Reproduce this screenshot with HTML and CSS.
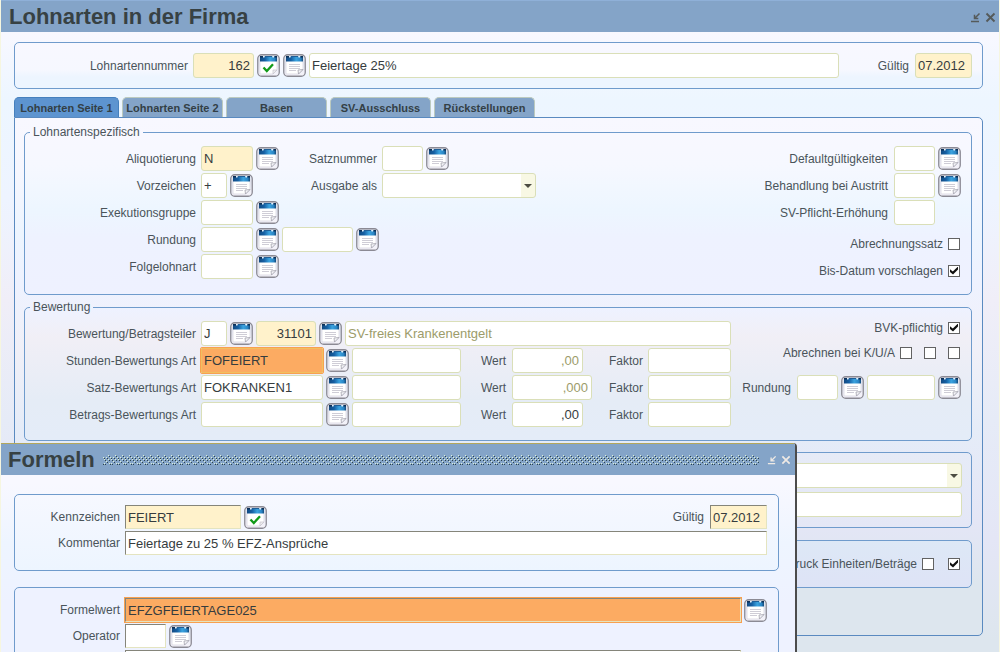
FILE: index.html
```html
<!DOCTYPE html>
<html lang="de">
<head>
<meta charset="utf-8">
<title>Lohnarten in der Firma</title>
<link rel="stylesheet" href="styles.css">
</head>
<body>
<svg class="sprite" aria-hidden="true">
  <defs>
    <linearGradient id="blue" x1="0" x2="1" y1="0" y2="0">
      <stop offset="0" stop-color="#124a82"/>
      <stop offset=".3" stop-color="#1560a4"/>
      <stop offset=".6" stop-color="#3ba3df"/>
      <stop offset=".85" stop-color="#2a86c6"/>
      <stop offset="1" stop-color="#124a7c"/>
    </linearGradient>
    <linearGradient id="plate" x1="0" x2="0" y1="0" y2="1">
      <stop offset="0" stop-color="#dde3f0"/>
      <stop offset="1" stop-color="#f6f4fa"/>
    </linearGradient>
    <pattern id="bumps" width="7" height="12" patternUnits="userSpaceOnUse">
      <path d="M5 1h1v1H5zM3 3h1v1H3zM5 5h1v1H5zM1 5h1v1H1zM3 7h1v1H3zM1 9h1v1H1zM6 9h1v1H6zM0 3h1v1H0z" fill="#dcefd8"/>
      <path d="M6 2h1v1H6zM4 4h1v1H4zM2 6h1v1H2zM6 6h1v1H6zM4 8h1v1H4zM2 10h1v1H2zM0 10h1v1H0zM1 4h1v1H1z" fill="#2c444c"/>
    </pattern>
    <symbol id="calendar" viewBox="0 0 23 23">
      <rect x=".75" y=".75" width="21.5" height="21.5" rx="4" fill="url(#plate)" stroke="#8b8a94" stroke-width="1.3"/>
      <path d="M3 5h17v11l-4 4H3z" fill="#fff" stroke="#d4d2de" stroke-width=".7"/>
      <path d="M3 2.500h17v5H3z" fill="url(#blue)"/>
      <path d="M3 2h3v1.500H3zM17.500 2H20v1.500h-2.500z" fill="#0d2f56"/>
      <path d="M6 2h1.500v1.500H6zM15.500 2H17v1.500h-1.500z" fill="#e6f3fc"/>
      <path d="M8 2h7v1H8z" fill="#1f5f98"/>
    </symbol>
    <symbol id="list" viewBox="0 0 23 23">
      <use href="#calendar"/>
      <path d="M6 10.500h11M6 12.500h11M6 14.500h11M6 16.500h7" stroke="#cfcdd6" stroke-width="1"/>
      <path d="M20 15.500l-4.500 4.500-.5-4z" fill="#f4f4f8" stroke="#a5a3ad" stroke-width=".8"/>
    </symbol>
    <symbol id="confirm" viewBox="0 0 23 23">
      <use href="#calendar"/>
      <path d="M20 16l-4 4v-4z" fill="#eee" stroke="#c5c3cd" stroke-width=".7"/>
      <path d="M6.500 13.500l3.300 3.500 6.200-6.800" fill="none" stroke="#119a18" stroke-width="2.300"/>
    </symbol>
    <symbol id="minimize" viewBox="0 0 11 11">
      <path d="M1 9.500h8M9.500 1.500L5 6M4.500 2.800v3.700h3.800" fill="none" stroke="currentColor" stroke-width="1.500"/>
    </symbol>
    <symbol id="close" viewBox="0 0 11 11">
      <path d="M1.500 1.500l8 8M9.500 1.500l-8 8" fill="none" stroke="currentColor" stroke-width="1.900"/>
    </symbol>
  </defs>
</svg>

<div class="desktop">
  <header class="titlebar">
    <h1>Lohnarten in der Firma</h1>
    <button class="win" aria-label="Verkleinern"><svg><use href="#minimize"/></svg></button>
    <button class="win" aria-label="Schließen"><svg><use href="#close"/></svg></button>
  </header>

  <main class="form">
    <section class="panel key row">
      <label class="lead" for="nr">Lohnartennummer</label>
      <input class="field key-no num must" id="nr" value="162">
      <button class="icon" aria-label="Bestätigen"><svg><use href="#confirm"/></svg></button>
      <button class="icon" aria-label="Liste Lohnarten"><svg><use href="#list"/></svg></button>
      <input class="field grow" aria-label="Bezeichnung" value="Feiertage 25%">
      <label class="valid" for="gueltig">Gültig</label>
      <input class="field date must" id="gueltig" value="07.2012">
    </section>

    <nav class="tabs">
      <button class="tab active">Lohnarten Seite 1</button>
      <button class="tab">Lohnarten Seite 2</button>
      <button class="tab">Basen</button>
      <button class="tab">SV-Ausschluss</button>
      <button class="tab">Rückstellungen</button>
    </nav>

    <div class="page">
      <fieldset class="group specific">
        <legend>Lohnartenspezifisch</legend>
        <div class="columns">
          <div class="rows">
            <div class="row">
              <label class="lead" for="ali">Aliquotierung</label>
              <div class="row slot">
                <input class="field w-code must" id="ali" value="N">
                <button class="icon" aria-label="Liste Aliquotierung"><svg><use href="#list"/></svg></button>
              </div>
              <label class="mid" for="satz">Satznummer</label>
              <input class="field w-short" id="satz">
              <button class="icon" aria-label="Liste Satznummer"><svg><use href="#list"/></svg></button>
            </div>
            <div class="row">
              <label class="lead" for="vor">Vorzeichen</label>
              <div class="row slot">
                <input class="field w-char" id="vor" value="+">
                <button class="icon" aria-label="Liste Vorzeichen"><svg><use href="#list"/></svg></button>
              </div>
              <label class="mid" for="ausgabe">Ausgabe als</label>
              <div class="choice w-choice"><select class="field" id="ausgabe"><option></option></select></div>
            </div>
            <div class="row">
              <label class="lead" for="exe">Exekutionsgruppe</label>
              <input class="field w-code" id="exe">
              <button class="icon" aria-label="Liste Exekutionsgruppe"><svg><use href="#list"/></svg></button>
            </div>
            <div class="row">
              <label class="lead" for="rund">Rundung</label>
              <input class="field w-code" id="rund">
              <button class="icon" aria-label="Liste Rundung"><svg><use href="#list"/></svg></button>
              <input class="field w-value" aria-label="Rundung Wert">
              <button class="icon" aria-label="Liste Rundung Wert"><svg><use href="#list"/></svg></button>
            </div>
            <div class="row">
              <label class="lead" for="folge">Folgelohnart</label>
              <input class="field w-code" id="folge">
              <button class="icon" aria-label="Liste Folgelohnart"><svg><use href="#list"/></svg></button>
            </div>
          </div>
          <div class="side">
            <div class="pairs">
              <label for="def">Defaultgültigkeiten</label>
              <input class="field" id="def">
              <button class="icon" aria-label="Liste Defaultgültigkeiten"><svg><use href="#list"/></svg></button>
              <label for="aus">Behandlung bei Austritt</label>
              <input class="field" id="aus">
              <button class="icon" aria-label="Liste Behandlung bei Austritt"><svg><use href="#list"/></svg></button>
              <label for="svp">SV-Pflicht-Erhöhung</label>
              <input class="field" id="svp">
            </div>
            <label class="check tall">Abrechnungssatz <input type="checkbox"></label>
            <label class="check tall">Bis-Datum vorschlagen <input type="checkbox" checked></label>
          </div>
        </div>
      </fieldset>

      <fieldset class="group rating">
        <legend>Bewertung</legend>
        <div class="columns">
          <div class="rows">
            <div class="row">
              <label class="lead" for="bew">Bewertung/Betragsteiler</label>
              <input class="field w-char" id="bew" value="J">
              <button class="icon" aria-label="Liste Bewertung"><svg><use href="#list"/></svg></button>
              <input class="field w-part num must" aria-label="Betragsteiler" value="31101">
              <button class="icon" aria-label="Liste Betragsteiler"><svg><use href="#list"/></svg></button>
              <input class="field grow" aria-label="Betragsteiler Text" value="SV-freies Krankenentgelt" disabled>
            </div>
            <div class="row">
              <label class="lead" for="std">Stunden-Bewertungs Art</label>
              <input class="field w-kind current" id="std" value="FOFEIERT">
              <button class="icon" aria-label="Liste Stunden-Bewertung"><svg><use href="#list"/></svg></button>
              <input class="field w-text" aria-label="Stunden-Bewertung Text">
              <label class="wert" for="w1">Wert</label>
              <div class="amount"><input class="field w-value num" id="w1" value=",00" disabled></div>
              <label class="faktor" for="f1">Faktor</label>
              <input class="field w-factor" id="f1">
            </div>
            <div class="row">
              <label class="lead" for="sba">Satz-Bewertungs Art</label>
              <input class="field w-kind" id="sba" value="FOKRANKEN1">
              <button class="icon" aria-label="Liste Satz-Bewertung"><svg><use href="#list"/></svg></button>
              <input class="field w-text" aria-label="Satz-Bewertung Text">
              <label class="wert" for="w2">Wert</label>
              <div class="amount"><input class="field num" id="w2" value=",000" disabled></div>
              <label class="faktor" for="f2">Faktor</label>
              <input class="field w-factor" id="f2">
            </div>
            <div class="row">
              <label class="lead" for="bba">Betrags-Bewertungs Art</label>
              <input class="field w-kind" id="bba">
              <button class="icon" aria-label="Liste Betrags-Bewertung"><svg><use href="#list"/></svg></button>
              <input class="field w-text" aria-label="Betrags-Bewertung Text">
              <label class="wert" for="w3">Wert</label>
              <div class="amount"><input class="field w-value num" id="w3" value=",00"></div>
              <label class="faktor" for="f3">Faktor</label>
              <input class="field w-factor" id="f3">
            </div>
          </div>
          <div class="side billing">
            <label class="check">BVK-pflichtig <input type="checkbox" checked></label>
            <div class="check">
              <label for="k">Abrechnen bei K/U/A</label>
              <span class="boxes"><input type="checkbox" id="k"><input type="checkbox" aria-label="U"><input type="checkbox" aria-label="A"></span>
            </div>
            <div class="row round">
              <label for="r2">Rundung</label>
              <input class="field w-short" id="r2">
              <button class="icon" aria-label="Liste Rundung Bewertung"><svg><use href="#list"/></svg></button>
              <input class="field w-result" aria-label="Rundung Bewertung Wert">
              <button class="icon" aria-label="Liste Rundungswert"><svg><use href="#list"/></svg></button>
            </div>
          </div>
        </div>
      </fieldset>

      <section class="panel texts">
        <div class="choice"><select class="field" aria-label="Auswahl"><option></option></select></div>
        <input class="field" aria-label="Text">
      </section>

      <section class="panel print">
        <div class="check">
          <label for="druck">Druck Einheiten/Beträge</label>
          <span class="boxes"><input type="checkbox" id="druck"><input type="checkbox" aria-label="Beträge" checked></span>
        </div>
      </section>
    </div>
  </main>

  <div class="dialog" role="dialog" aria-labelledby="dlg">
    <header class="titlebar">
      <h2 id="dlg">Formeln</h2>
      <svg class="grip" aria-hidden="true"><rect width="100%" height="100%" fill="url(#bumps)"/></svg>
      <button class="win" aria-label="Dialog verkleinern"><svg><use href="#minimize"/></svg></button>
      <button class="win" aria-label="Dialog schließen"><svg><use href="#close"/></svg></button>
    </header>
    <div class="dialog-body">
      <section class="panel rows">
        <div class="row">
          <label class="lead" for="kenn">Kennzeichen</label>
          <input class="field inset w-mark must" id="kenn" value="FEIERT">
          <button class="icon" aria-label="Formel bestätigen"><svg><use href="#confirm"/></svg></button>
          <label class="valid push" for="g2">Gültig</label>
          <input class="field inset date must" id="g2" value="07.2012">
        </div>
        <div class="row">
          <label class="lead" for="komm">Kommentar</label>
          <input class="field inset grow" id="komm" value="Feiertage zu 25 % EFZ-Ansprüche">
        </div>
      </section>
      <section class="panel rows formula">
        <div class="row">
          <label class="lead" for="fw">Formelwert</label>
          <input class="field inset grow current" id="fw" value="EFZGFEIERTAGE025">
          <button class="icon" aria-label="Liste Formelwert"><svg><use href="#list"/></svg></button>
        </div>
        <div class="row">
          <label class="lead" for="op">Operator</label>
          <input class="field inset w-short" id="op">
          <button class="icon" aria-label="Liste Operator"><svg><use href="#list"/></svg></button>
        </div>
        <div class="row">
          <span class="lead"></span>
          <input class="field inset grow" aria-label="Formelwert 2">
          <span class="icon"></span>
        </div>
      </section>
    </div>
  </div>
</div>
</body>
</html>
```

FILE: styles.css
```css
* { box-sizing: border-box; }

body {
  margin: 0;
  font: 12px/14px "Liberation Sans", Arial, sans-serif;
  color: #4a545a;
}

.sprite { position: absolute; width: 0; height: 0; }

.desktop {
  position: relative;
  height: 100vh;
  overflow: hidden;
  border: solid #f6f6e0;
  border-width: 0 1px;
  background: linear-gradient(#f8f8ff 32px, #edf6ff 100px, #eef4ff 200px, #f0eef8 300px, #e6ebf7 420px, #e4e6f6 540px, #dde6ee 640px);
}

/* Title bars */
.titlebar {
  display: flex;
  align-items: center;
  gap: 4px;
  height: 32px;
  padding: 1px 3px 0 8px;
  background: #84a4c8;
  border-top: 1px solid #8fb0d8;
}
.titlebar h1, .titlebar h2 {
  margin: 0 auto 0 0;
  font-size: 22px;
  line-height: 26px;
  color: #374143;
}
.win {
  width: 11px;
  height: 11px;
  padding: 0;
  border: 0;
  background: none;
  color: #555a5a;
}
.win svg, .icon svg { display: block; width: 100%; height: 100%; }

/* Panels and groups */
.form { padding: 10px 16px 16px 13px; }

.panel, .group {
  border: 1px solid #6f9bcc;
  border-radius: 5px;
}
.key {
  padding: 10px;
  padding-left: 0;
  background: linear-gradient(#f8f8ff, #f6f8ff 60%, #edf5ff 75%);
}
.key .lead { width: 175px; }
.page {
  padding: 7px 10px 47px 9px;
  border: 1px solid #5a8ac0;
  border-radius: 0 5px 5px 0;
  background: linear-gradient(#f8f8ff, #f6f7ff 10%, #edf5ff 22%, #eef2ff 32%, #f0f0f8 45%, #e5ecf8 60%, #e4e6f6 78%, #dde6ee 90%);
}
.group {
  min-width: 0;
  margin: 0;
  padding: 7px 10px 0 0;
}
.group legend { margin-left: 5px; padding: 0 3px; }
.specific {
  padding-bottom: 10px;
  background: linear-gradient(#f8f8ff, #f6f8ff 20%, #edf6ff 48%, #eef2ff 65%, #eef1ff);
}
.rating {
  margin-top: 5px;
  padding-bottom: 13px;
  background: linear-gradient(#eef2ff, #f1eff6 22%, #e5ecf6 70%, #e4ecf8);
}
.texts {
  display: grid;
  gap: 4px;
  margin-top: 11px;
  padding: 10px 9px 10px 10px;
  background: linear-gradient(#e6ebf7, #e4e7f6);
}
.print {
  margin-top: 12px;
  padding: 16px 10px 17px;
  background: linear-gradient(#dde8f6, #dee3f6);
}

/* Tabs */
.tabs { display: flex; gap: 3px; margin-top: 8px; }
.tab {
  width: 101px;
  height: 20px;
  padding: 0;
  border: 1px solid #bccabf;
  border-bottom: 0;
  border-radius: 5px 5px 0 0;
  background: #84a4c8;
  font: bold 11px/14px "Liberation Sans", Arial, sans-serif;
  color: #333f45;
  white-space: nowrap;
}
.tab.active { width: 105px; border-color: #4680bd; background: #5d94d0; }

/* Rows */
.columns { display: flex; justify-content: space-between; }
.rows { display: grid; gap: 2px; align-content: start; }
.row { display: flex; align-items: center; gap: 3px; }
label { white-space: nowrap; }
.lead {
  flex: none;
  width: 173px;
  padding-right: 2px;
  text-align: right;
}
.slot { width: 78px; }
.mid { width: 97px; padding-right: 2px; text-align: right; }
.wert { width: 45px; padding-right: 3px; text-align: right; }
.faktor { width: 50px; padding-right: 2px; text-align: right; }
.amount { display: flex; width: 80px; }
.valid { width: 70px; padding-right: 3px; text-align: right; }
.push { margin-left: auto; }

.side {
  display: flex;
  flex-direction: column;
  align-items: flex-end;
}
.pairs {
  display: grid;
  grid-template-columns: auto 41px 23px;
  gap: 2px 3px;
  align-items: center;
  margin-bottom: 5px;
  text-align: right;
}
.pairs label { padding-right: 3px; }
.check {
  display: flex;
  align-items: center;
  gap: 5px;
  height: 13px;
  margin-right: 1px;
}
.tall { height: 27px; }
.boxes { display: flex; gap: 12px; }
.print .boxes { gap: 14px; }
.billing .check { margin-bottom: 12px; }
.round { margin-top: 4px; }
.round label { padding-right: 3px; }
.print .check { justify-content: flex-end; }

/* Controls */
.field {
  display: block;
  width: 100%;
  min-width: 0;
  height: 25px;
  margin: 0;
  padding: 0 3px 0 2px;
  border: 1px solid #dadfb8;
  border-radius: 3px;
  background: #fff;
  font: 13px/16px "Liberation Sans", Arial, sans-serif;
  color: #363c3e;
}
.field:disabled { color: #9c9c6a; }
.row > .field { flex: none; }
.row > .grow { flex: 1; }
.num { text-align: right; }
.must { background: #fff2cb; }
.current {
  border-color: #f0c060;
  border-radius: 1px;
  background: #fcab62;
  outline: 1px solid #f8a050;
}
.w-char { width: 26px; }
.w-short { width: 41px; }
.w-code { width: 52px; }
.w-part { width: 60px; }
.w-result { width: 68px; }
.w-value { width: 71px; }
.w-factor { width: 83px; }
.w-text { width: 109px; }
.w-mark { width: 116px; }
.w-kind { width: 122px; }
.w-choice { width: 154px; }
.key-no { width: 61px; }
.date { width: 57px; }

.icon {
  flex: none;
  width: 23px;
  height: 23px;
  padding: 0;
  border: 0;
  background: none;
}

.choice { display: grid; align-items: center; }
.choice .field {
  grid-area: 1 / 1;
  appearance: none;
  background: linear-gradient(to left, #f8f8e4 14px, #fff 14px);
}
.choice::after {
  content: "";
  grid-area: 1 / 1;
  justify-self: end;
  margin-right: 4px;
  border: 4px solid transparent;
  border-top-color: #4c4c42;
  border-bottom: 0;
  pointer-events: none;
}

input[type="checkbox"] {
  appearance: none;
  display: grid;
  place-items: center;
  width: 12px;
  height: 12px;
  margin: 0;
  border: 1px solid #626262;
  background: #fff;
}
input[type="checkbox"]:checked::before {
  content: "";
  width: 8px;
  height: 8px;
  background: #111;
  clip-path: polygon(0 35%, 35% 62%, 100% 0, 100% 38%, 38% 100%, 0 70%);
}

/* Dialog window */
.dialog {
  position: absolute;
  left: -1px;
  top: 443px;
  bottom: 0;
  width: 797px;
  overflow: hidden;
  border-right: 2px solid #4c4c4c;
  border-top-right-radius: 4px;
  background: linear-gradient(#f8f8ff 40px, #eef5ff 100px, #eef2ff 160px);
}
.dialog .titlebar { border-top-color: #b3a75c; padding-right: 4px; }
.dialog .titlebar h2 { margin: 0; }
.dialog .win { width: 10px; height: 10px; color: #eee9e4; }
.grip { flex: 1; height: 12px; margin: 0 4px; }
.dialog-body { padding: 19px 16px 0 14px; }
.dialog .lead { width: 107px; }
.dialog .panel {
  padding: 10px 11px 15px 0;
  background: linear-gradient(#f6f8ff, #edf5ff);
}
.dialog .formula { margin-top: 16px; background: #eef2ff; }
.inset {
  height: 24px;
  padding: 0 2px;
  border-color: #85857a #e4e4c0 #e4e4c0 #85857a;
  border-radius: 0;
}
```
